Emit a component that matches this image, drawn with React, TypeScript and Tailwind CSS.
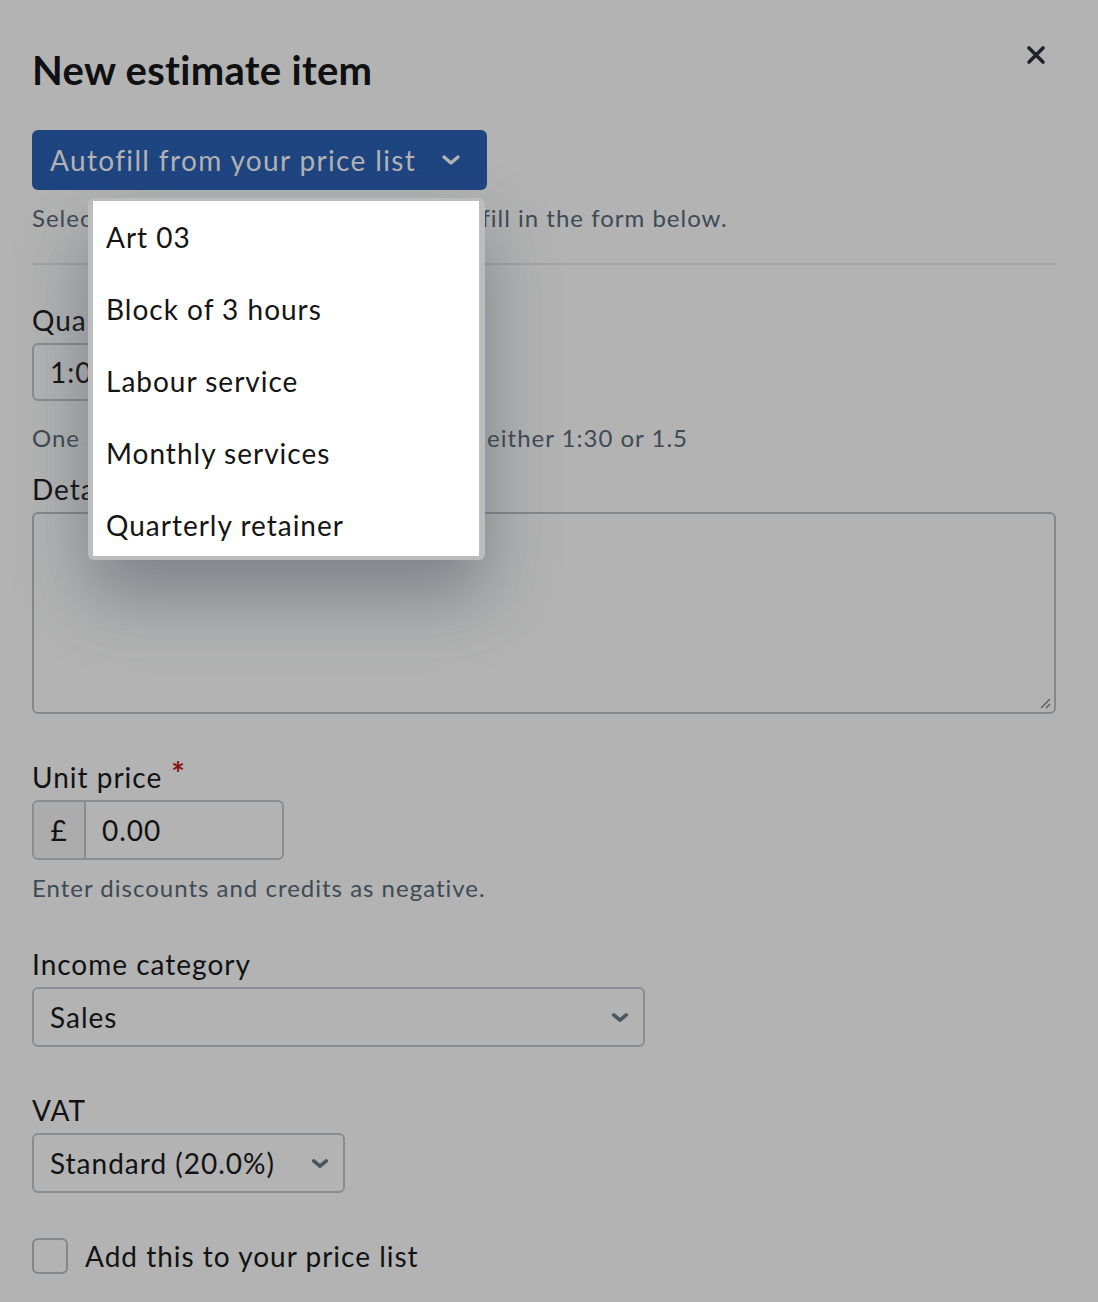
import React from "react";

const font = { fontFamily: "Lato, 'Noto Sans', sans-serif" };

function Chevron({ className, w = 3 }: { className?: string; w?: number }) {
  return (
    <svg viewBox="0 0 20 12" className={className} fill="none">
      <path d="M3 3l7 6 7-6" stroke="currentColor" strokeWidth={w} strokeLinecap="round" strokeLinejoin="round" />
    </svg>
  );
}

export default function App() {
  const items = ["Art 03", "Block of 3 hours", "Labour service", "Monthly services", "Quarterly retainer"];
  return (
    <div className="min-h-[1302px] w-full bg-[#b3b3b3] tracking-[1px] text-[#111214]" style={font}>
      <div className="pl-8 pr-[42px] pt-[40px]">
        {/* header */}
        <div className="flex items-start justify-between">
          <h1 className="mt-[6px] text-[40px] font-bold leading-[48px] tracking-[0.3px] text-[#0f1011]">New estimate item</h1>
          <button className="mr-[8px] mt-[3px] text-[#1d252c]">
            <svg viewBox="0 0 24 24" className="h-[24px] w-[24px]" fill="none">
              <path d="M5 5l14 14M19 5L5 19" stroke="currentColor" strokeWidth="3.6" strokeLinecap="round" />
            </svg>
          </button>
        </div>

        {/* autofill */}
        <div className="relative mt-[36px]">
          <button className="flex h-[60px] w-[455px] items-center justify-between rounded-[6px] bg-[#1f4581] pl-[18px] pr-[26px] text-[28px] tracking-[1.35px] text-[#b3b3b3]">
            <span>Autofill from your price list</span>
            <Chevron className="h-[12px] w-[20px]" w={3.4} />
          </button>
          <p className="mt-[12px] text-[24px] leading-[32px] text-[#3e4a54]">
            Select a product from your price list to fill in the form below.
          </p>
          <div className="absolute left-[56px] top-[68px] z-10 w-[397px] rounded-[6px] bg-[#bcbcbc] pb-[4px] pl-[5px] pr-[6px] pt-[3px] shadow-[0_36px_70px_rgba(60,70,85,0.45)]">
            <div className="h-[355px] overflow-hidden bg-white">
              {items.map((it) => (
                <div key={it} className="flex h-[72px] items-center px-[13px] text-[28px] text-[#141414]">
                  {it}
                </div>
              ))}
            </div>
          </div>
        </div>

        <hr className="mt-[29px] border-t-2 border-[#a1a1a6]" />

        {/* quantity */}
        <label className="mt-[38px] block text-[28px] leading-[34px]">Quantity</label>
        <div className="mt-[6px] flex h-[58px] w-[252px] items-center rounded-[6px] border-2 border-[#8a8d90] px-[16px] text-[28px]">1:00</div>
        <p className="mt-[21px] text-[24px] leading-[32px] text-[#3e4a54]">One and a half hours can be entered as either 1:30 or 1.5</p>

        {/* details */}
        <label className="mt-[18px] block text-[28px] leading-[34px]">Details</label>
        <div className="relative mt-[6px] h-[202px] w-full rounded-[6px] border-2 border-[#85888b]">
          <svg viewBox="0 0 14 14" className="absolute bottom-[2px] right-[2px] h-[14px] w-[14px]" fill="none">
            <path d="M12 3L3 12M12 8L8 12" stroke="#555" strokeWidth="1.2" />
          </svg>
        </div>

        {/* unit price */}
        <label className="mt-[46px] flex items-start text-[28px] leading-[34px]">
          Unit price<span className="ml-[9px] mt-[-2px] text-[32px] font-bold leading-[32px] text-[#8b1010]">*</span>
        </label>
        <div className="mt-[6px] flex h-[60px] w-[252px] overflow-hidden rounded-[6px] border-2 border-[#8a8d90]">
          <div className="flex w-[52px] items-center justify-center border-r-2 border-[#8a8d90] bg-[#acacac] text-[28px]">£</div>
          <div className="flex flex-1 items-center pl-[16px] text-[28px]">0.00</div>
        </div>
        <p className="mt-[12px] text-[24px] leading-[32px] text-[#3e4a54]">Enter discounts and credits as negative.</p>

        {/* income category */}
        <label className="mt-[43px] block text-[28px] leading-[34px]">Income category</label>
        <div className="mt-[6px] flex h-[60px] w-[613px] items-center justify-between rounded-[6px] border-2 border-[#8a8d90] pl-[16px] pr-[14px] text-[28px]">
          <span>Sales</span>
          <Chevron className="h-[11px] w-[18px] text-[#4a555e]" w={4} />
        </div>

        {/* VAT */}
        <label className="mt-[46px] block text-[28px] leading-[34px]">VAT</label>
        <div className="mt-[6px] flex h-[60px] w-[313px] items-center justify-between rounded-[6px] border-2 border-[#8a8d90] pl-[16px] pr-[14px] text-[28px]">
          <span>Standard (20.0%)</span>
          <Chevron className="h-[11px] w-[18px] text-[#4a555e]" w={4} />
        </div>

        {/* checkbox */}
        <div className="mt-[42px] flex items-center gap-[17px]">
          <div className="h-[36px] w-[36px] rounded-[6px] border-2 border-[#83878a]" />
          <span className="text-[28px]">Add this to your price list</span>
        </div>
      </div>
    </div>
  );
}
